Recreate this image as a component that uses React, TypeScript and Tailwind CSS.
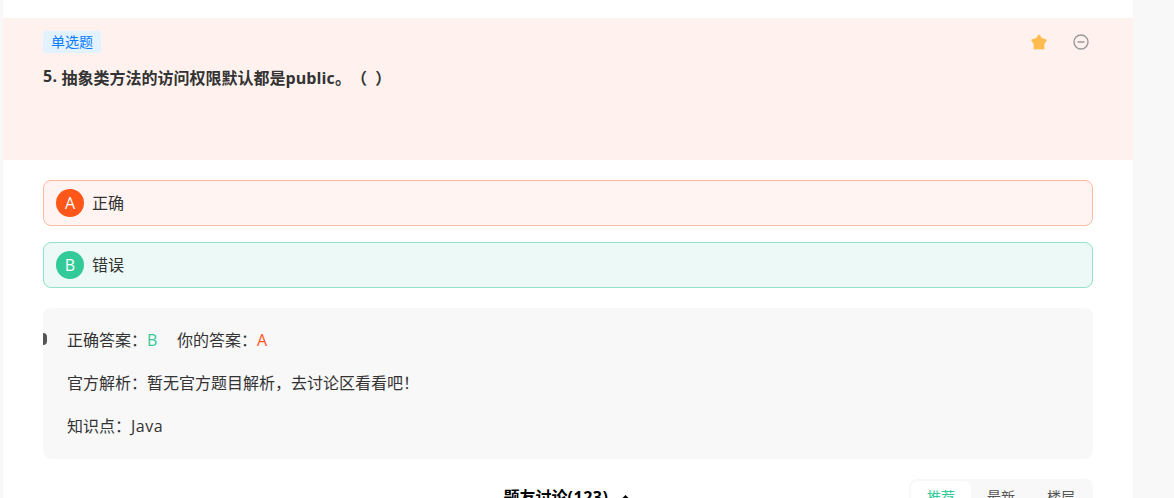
import clsx from 'clsx';

type Option = {
  label: string;
  text: string;
  correct: boolean;
};

const options: Option[] = [
  { label: 'A', text: '正确', correct: false },
  { label: 'B', text: '错误', correct: true },
];

const sortTabs = ['推荐', '最新', '楼层'];

function StarIcon() {
  return (
    <svg className="-mt-px" width="16" height="16" viewBox="0 0 16 16" fill="#ffbb4d" stroke="#ffbb4d" strokeWidth="2" strokeLinejoin="round">
      <path d="M8 1.6 10.2 5 14.7 6.2 12.3 9.6 12.4 14.6 8 14 3.6 14.6 3.7 9.6 1.3 6.2 5.8 5Z" />
    </svg>
  );
}

function MinusCircleIcon() {
  return (
    <svg width="16" height="16" viewBox="0 0 16 16" fill="none" stroke="#999" strokeWidth="1.4">
      <circle cx="8" cy="8" r="7" />
      <path d="M5 8h6" strokeLinecap="round" />
    </svg>
  );
}

function QuestionHeader() {
  return (
    <div className="h-[142px] bg-[#fff2ee] px-10 pt-[13px]">
      <div className="flex items-center justify-between">
        <span className="flex h-[22px] w-[58px] items-center justify-center rounded bg-[#e2f2ff] text-sm text-[#0a7cff]">
          单选题
        </span>
        <div className="flex items-center gap-[26px] pr-1">
          <StarIcon />
          <MinusCircleIcon />
        </div>
      </div>
      <div className="mt-3 flex font-bold leading-6">
        <span className="-mt-px w-[18.5px] whitespace-nowrap tracking-[0.4px]">5.</span>
        <span className="mt-px whitespace-pre">
          抽象类方法的访问权限默认都是<span className="tracking-[0.1px]">public</span>。（  ）
        </span>
      </div>
    </div>
  );
}

function OptionRow({ option }: { option: Option }) {
  return (
    <div
      className={clsx(
        'flex h-[46px] items-center gap-2 rounded-lg border px-3',
        option.correct ? 'border-[#92e1c8] bg-[#edf9f6]' : 'border-[#ffb9a3] bg-[#fff4f2]',
      )}
    >
      <span
        className={clsx(
          'flex size-7 items-center justify-center rounded-full font-medium text-white',
          option.correct ? 'bg-[#32ca99]' : 'bg-[#ff5619]',
        )}
      >
        {option.label}
      </span>
      <span>{option.text}</span>
    </div>
  );
}

function AnswerPanel() {
  return (
    <div className="relative mt-5 flex h-[151px] flex-col gap-[19px] rounded-lg bg-[#f8f8f8] px-6 pt-5 leading-6">
      <span className="absolute left-0 top-[25px] h-3 w-1 rounded-r bg-[#555]" />
      <div className="flex">
        <span>正确答案：</span>
        <span className="w-[30px] text-[#32ca99]">B</span>
        <span>你的答案：</span>
        <span className="text-[#ff5619]">A</span>
      </div>
      <div>官方解析：暂无官方题目解析，去讨论区看看吧！</div>
      <div>
        知识点：<span className="tracking-[0.5px]">Java</span>
      </div>
    </div>
  );
}

function Discussion() {
  return (
    <div className="mt-5 grid grid-cols-[1fr_auto_1fr] items-center">
      <span />
      <div className="flex items-center gap-3 pr-[3px] font-bold text-black">
        <span>
          题友讨论<span className="tracking-[0.55px]">(123)</span>
        </span>
        <svg className="mt-0.5" width="9" height="6" viewBox="0 0 9 6" fill="none" stroke="#000" strokeWidth="1.8">
          <path d="M.8 5 4.5 1.3 8.2 5" />
        </svg>
      </div>
      <div className="flex justify-self-end rounded-lg bg-[#f8f8f8] p-0.5 text-sm text-[#555]">
        {sortTabs.map((tab, i) => (
          <span
            key={tab}
            className={clsx(
              'flex h-8 w-[60px] items-center justify-center rounded-md',
              i === 0 && 'bg-white text-[#32ca99]',
            )}
          >
            {tab}
          </span>
        ))}
      </div>
    </div>
  );
}

export default function App() {
  return (
    <div className="h-[498px] overflow-hidden bg-[#f8f8f8] pl-[3px] font-['Open_Sans','Noto_Sans_CJK_SC',sans-serif] text-base text-[#333] [text-spacing-trim:space-all]">
      <div className="h-[540px] w-[1130px] bg-white pt-[18px]">
        <QuestionHeader />
        <div className="px-10 pt-5">
          <div className="flex flex-col gap-4">
            {options.map((option) => (
              <OptionRow key={option.label} option={option} />
            ))}
          </div>
          <AnswerPanel />
          <Discussion />
        </div>
      </div>
    </div>
  );
}
